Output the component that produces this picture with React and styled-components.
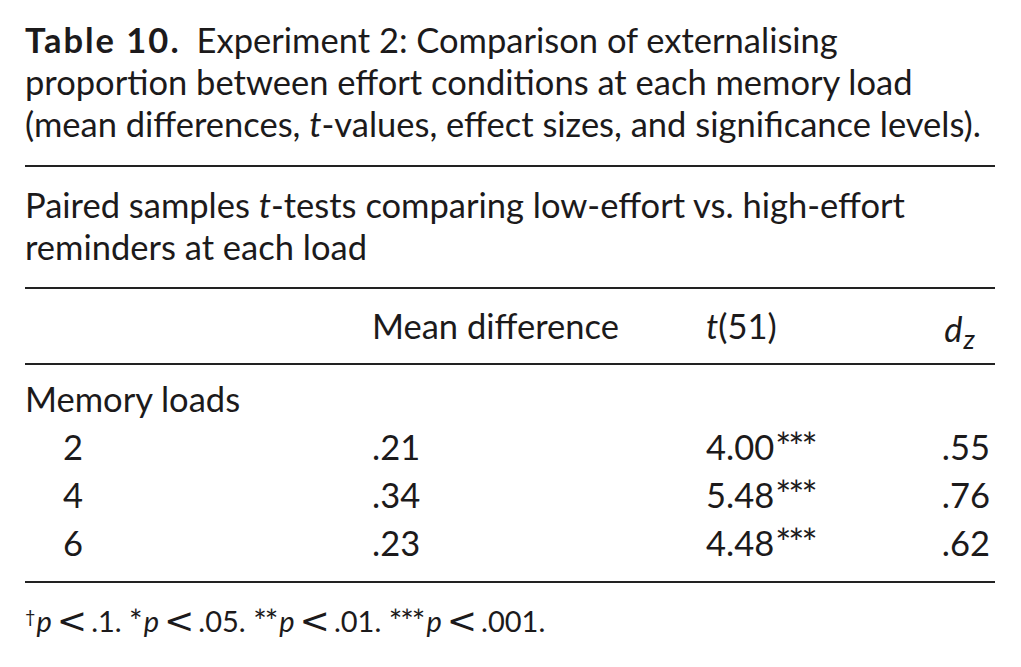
import React from 'react';
import styled, { createGlobalStyle } from 'styled-components';

const GlobalStyle = createGlobalStyle`
	body {
		margin: 0;
		background: #fff;
		color: #1c1a1b;
		font-family: Lato, "Open Sans", sans-serif;
	}
`;

const Page = styled.div`
	width: 970px;
	padding: 19px 26px 0 25px;
	font-size: 34.5px;
`;

const Caption = styled.div`
	line-height: 42px;
	padding-bottom: 20px;
	border-bottom: 2px solid #222;
`;

const Label = styled.span`
	font-weight: 700;
	letter-spacing: 2px;
	margin-right: 16px;
`;

const Subtitle = styled.div`
	line-height: 42px;
	padding: 17px 0 19px;
	border-bottom: 2px solid #222;
`;

const Grid = styled.div`
	display: grid;
	grid-template-columns: 347px 334px 1fr auto;
	border-bottom: 2px solid #222;
	padding-bottom: 14px;
`;

const Head = styled.div`
	line-height: 48px;
	padding: 13px 0;
	border-bottom: 2px solid #222;
	text-align: ${({ right }) => (right ? 'right' : 'left')};
	padding-right: ${({ right }) => (right ? '20px' : '0')};
`;

const Effect = styled.i`
	vertical-align: -0.08em;
	line-height: 0;
`;

const Sub = styled.sub`
	font-size: 0.78em;
	line-height: 0;
	vertical-align: -0.38em;
	margin-left: 1px;
`;

const Group = styled.div`
	grid-column: 1 / -1;
	line-height: 48px;
	margin-top: 10px;
`;

const Cell = styled.div`
	line-height: 48px;
	padding-left: ${({ indent }) => (indent ? '38px' : '0')};
	padding-right: ${({ right }) => (right ? '5px' : '0')};
	text-align: ${({ right }) => (right ? 'right' : 'left')};
`;

const Stars = styled.span`
	font-size: 1.1em;
	line-height: 0;
	vertical-align: -0.02em;
	letter-spacing: -3px;
	margin-left: 1px;
`;

const Footnote = styled.div`
	font-size: 29px;
	line-height: 40px;
	padding-top: 18px;
`;

const Mark = styled.span`
	font-size: ${({ dagger }) => (dagger ? '0.62em' : '1.1em')};
	line-height: 0;
	vertical-align: ${({ dagger }) => (dagger ? '0.5em' : '-0.02em')};
	letter-spacing: -2px;
	margin-right: 3px;
`;

const Less = styled.span`
	font-family: "DejaVu Sans", sans-serif;
	font-size: 1.25em;
	line-height: 0;
	vertical-align: -0.03em;
	margin: 0 4px 0 5px;
`;

const rows = [
	{ load: '2', mean: '.21', t: '4.00', d: '.55' },
	{ load: '4', mean: '.34', t: '5.48', d: '.76' },
	{ load: '6', mean: '.23', t: '4.48', d: '.62' },
];

const notes = [
	{ mark: '†', value: '.1' },
	{ mark: '*', value: '.05' },
	{ mark: '**', value: '.01' },
	{ mark: '***', value: '.001' },
];

export default function App() {
	return (
		<>
			<GlobalStyle />
			<Page>
				<Caption>
					<Label>Table 10.</Label>
					Experiment 2: Comparison of externalising
					<br />
					proportion between effort conditions at each memory load
					<br />
					(mean differences, <i>t</i>-values, effect sizes, and significance levels).
				</Caption>
				<Subtitle>
					Paired samples <i>t</i>-tests comparing low-effort vs. high-effort
					<br />
					reminders at each load
				</Subtitle>
				<Grid>
					<Head />
					<Head>Mean difference</Head>
					<Head>
						<i>t</i>(51)
					</Head>
					<Head right>
						<Effect>d</Effect>
						<Sub>
							<i>z</i>
						</Sub>
					</Head>
					<Group>Memory loads</Group>
					{rows.map(row => (
						<React.Fragment key={row.load}>
							<Cell indent>{row.load}</Cell>
							<Cell>{row.mean}</Cell>
							<Cell>
								{row.t}
								<Stars>***</Stars>
							</Cell>
							<Cell right>{row.d}</Cell>
						</React.Fragment>
					))}
				</Grid>
				<Footnote>
					{notes.map(note => (
						<React.Fragment key={note.value}>
							<Mark dagger={note.mark === '†'}>{note.mark}</Mark>
							<i>p</i>
							<Less>&lt;</Less>
							{note.value}.{' '}
						</React.Fragment>
					))}
				</Footnote>
			</Page>
		</>
	);
}
